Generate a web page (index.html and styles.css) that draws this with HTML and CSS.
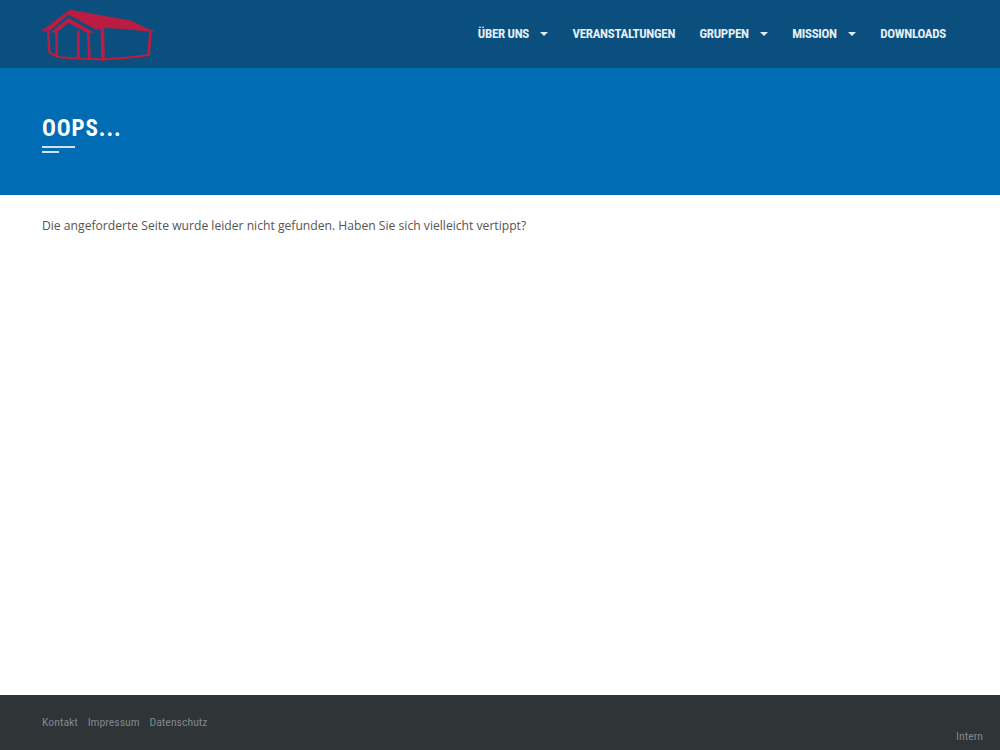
FILE: index.html
```html
<!DOCTYPE html>
<html lang="de">
<head>
<meta charset="utf-8">
<title>Oops</title>
<link rel="stylesheet" href="styles.css">
</head>
<body>
<header class="topbar">
  <a class="logo" href="#" aria-label="Logo">
    <svg width="114" height="54" viewBox="33 24 342 162" fill="none" stroke="#bd1c42" stroke-linejoin="round" stroke-linecap="round">
      <path d="M36 92 L120 30 L220 48 L300 62 L373 96 L300 88 L220 82 L198 88 L115 43 L58 92 Z" fill="#bd1c42" stroke-width="2"/>
      <path d="M65 95 L115 55 L190 97 L170 97 L115 68 L78 98 Z" fill="#bd1c42" stroke-width="2"/>
      <path d="M55 95 L58 155" stroke-width="7"/>
      <path d="M80 100 L80 165" stroke-width="8"/>
      <path d="M145 97 L145 172" stroke-width="9"/>
      <path d="M175 97 L178 172" stroke-width="8"/>
      <path d="M217 85 L219 178" stroke-width="11"/>
      <path d="M361 98 L356 165" stroke-width="8"/>
      <path d="M58 155 Q72 168 90 172 Q150 178 218 178 Q290 175 356 165" stroke-width="6"/>
    </svg>
  </a>
  <nav class="nav">
    <a class="nav-item has-caret" href="#">ÜBER UNS</a>
    <a class="nav-item" href="#">VERANSTALTUNGEN</a>
    <a class="nav-item has-caret" href="#">GRUPPEN</a>
    <a class="nav-item has-caret" href="#">MISSION</a>
    <a class="nav-item" href="#">DOWNLOADS</a>
  </nav>
</header>
<section class="hero">
  <h1 class="hero-title">OOPS...</h1>
  <div class="rule rule-long"></div>
  <div class="rule rule-short"></div>
</section>
<main class="content">
  <p class="message">Die angeforderte Seite wurde leider nicht gefunden. Haben Sie sich vielleicht vertippt?</p>
</main>
<footer class="footer">
  <div class="footer-links">
    <a href="#">Kontakt</a>
    <a href="#">Impressum</a>
    <a href="#">Datenschutz</a>
  </div>
  <a class="footer-intern" href="#">Intern</a>
</footer>
</body>
</html>
```
FILE: styles.css
```css
* { box-sizing: border-box; }
html, body { margin: 0; height: 100%; }
body {
  width: 1000px;
  height: 750px;
  overflow: hidden;
  display: flex;
  flex-direction: column;
  background: #fff;
  font-family: "Open Sans", sans-serif;
}
a { text-decoration: none; color: inherit; }
.topbar {
  height: 68px;
  flex: none;
  display: flex;
  justify-content: space-between;
  padding: 8px 54px 0 41px;
  background: #0b4f7f;
}
.logo { display: block; height: 54px; }
.logo svg { display: block; }
.nav {
  display: flex;
  gap: 24.5px;
  padding-top: 17px;
  font-family: "Roboto Condensed", Roboto, sans-serif;
  font-stretch: 75%;
  font-weight: 700;
  font-size: 13px;
  letter-spacing: -0.31px;
  line-height: 17px;
  color: #e4eef5;
}
.nav-item { display: flex; height: 17px; }
.has-caret::after {
  content: "";
  width: 0;
  height: 0;
  margin: 7px 0 0 11px;
  border-left: 4px solid transparent;
  border-right: 4px solid transparent;
  border-top: 4px solid #e4eef5;
}
.hero {
  height: 127px;
  flex: none;
  padding: 47px 0 0 42px;
  background: #006cb3;
  color: #fff;
}
.hero-title {
  margin: 0 0 4px;
  font-family: "Roboto Condensed", Roboto, sans-serif;
  font-stretch: 75%;
  font-weight: 700;
  font-size: 23px;
  line-height: 27px;
  letter-spacing: 0.9px;
}
.rule { height: 2px; background: #cfe3f1; }
.rule-long { width: 33px; margin-bottom: 3px; }
.rule-short { width: 17px; }
.content { flex: 1; padding: 22px 42px 0; }
.message {
  margin: 0;
  font-size: 12.15px;
  line-height: 18px;
  color: #555;
}
.footer {
  height: 55px;
  flex: none;
  display: flex;
  justify-content: space-between;
  padding: 19px 17px 0 42px;
  background: #2f3437;
  color: #7f878c;
  font-family: "Roboto Condensed", Roboto, sans-serif;
  font-stretch: 75%;
  font-size: 11.8px;
  line-height: 16px;
}
.footer-links { display: flex; gap: 9.8px; }
.footer-intern { margin-top: 14px; }
```
